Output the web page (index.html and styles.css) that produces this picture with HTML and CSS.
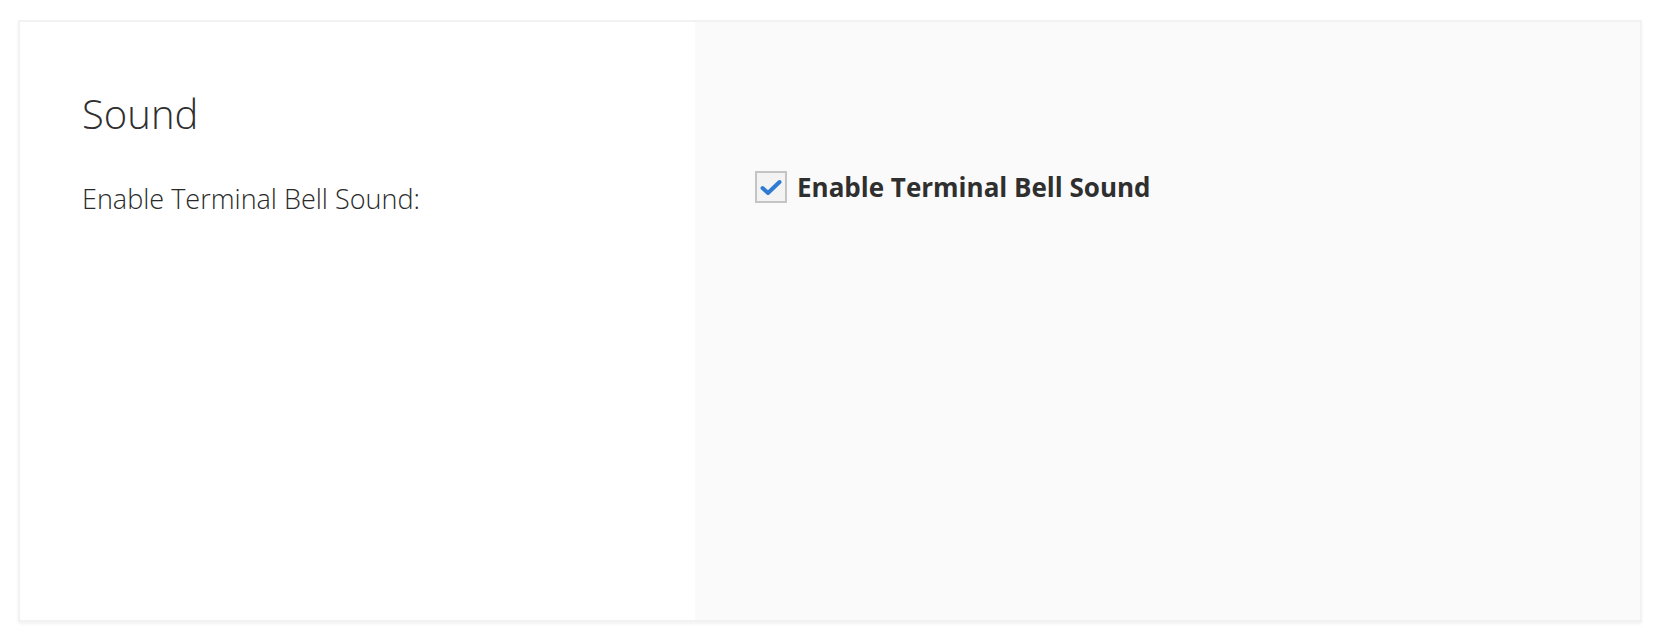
FILE: index.html
```html
<!DOCTYPE html>
<html>
<head>
<meta charset="utf-8">
<link rel="stylesheet" href="styles.css">
</head>
<body>
<div class="page">
  <section class="card">
    <div class="col-label">
      <h2 class="title">Sound</h2>
      <div class="field-label">Enable Terminal Bell Sound:</div>
    </div>
    <div class="col-control">
      <label class="check">
        <span class="box">
          <svg width="22" height="17" viewBox="0 0 22 17"><path d="M2.5 9 L8 14 L19.5 3" fill="none" stroke="#2f7bd3" stroke-width="4" stroke-linecap="round" stroke-linejoin="round"/></svg>
        </span>
        <span class="check-text">Enable Terminal Bell Sound</span>
      </label>
    </div>
  </section>
</div>
</body>
</html>
```
FILE: styles.css
```css
html, body {
  margin: 0;
  padding: 0;
  background: #ffffff;
}
.page {
  padding: 20px 16px 8px 18px;
  font-family: "Open Sans", "Liberation Sans", sans-serif;
  color: #2f2f2f;
}
.card {
  display: flex;
  height: 598px;
  border: 2px solid #f2f2f2;
  box-shadow: 0 2px 3px rgba(0,0,0,0.05);
  background: #ffffff;
}
.col-label {
  width: 675px;
  box-sizing: border-box;
  padding: 64px 0 0 62px;
  background: #ffffff;
}
.title {
  margin: 0;
  font-weight: 300;
  font-size: 40px;
  line-height: 56px;
  color: #2f2f2f;
}
.field-label {
  margin-top: 40px;
  font-weight: 300;
  font-size: 27px;
  line-height: 34px;
  color: #2a2a2a;
}
.col-control {
  flex: 1;
  background: #fafafa;
  padding: 148px 0 0 60px;
}
.check {
  display: flex;
  align-items: center;
  gap: 10px;
}
.box {
  width: 28px;
  height: 28px;
  border: 2px solid #c4c4c4;
  background: #f3f3f3;
  display: flex;
  align-items: center;
  justify-content: center;
}
.check-text {
  font-weight: 700;
  font-size: 26px;
  line-height: 34px;
  color: #2f2f2f;
}
```
